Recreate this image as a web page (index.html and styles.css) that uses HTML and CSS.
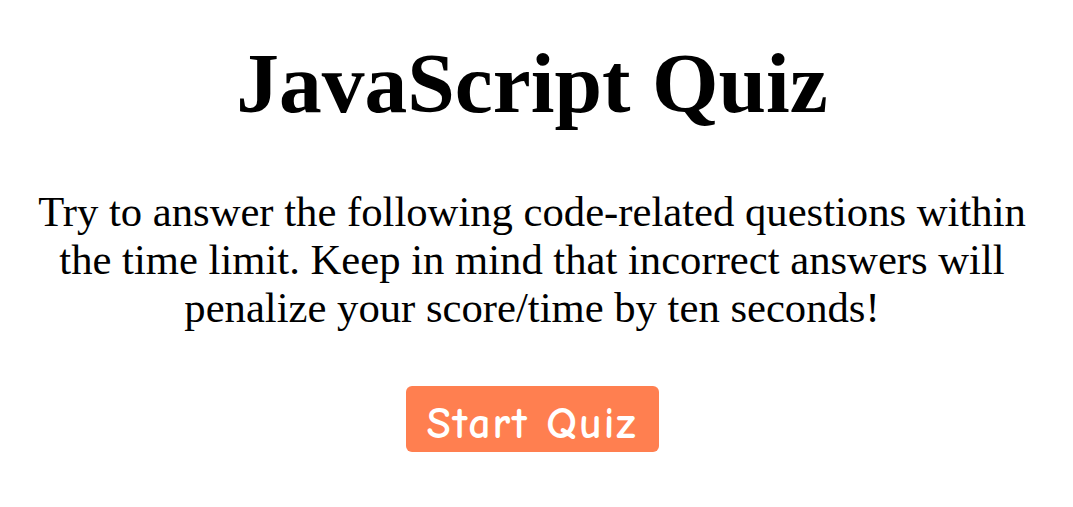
FILE: index.html
```html
<!DOCTYPE html>
<html>
<head>
<meta charset="utf-8">
<link rel="stylesheet" href="styles.css">
</head>
<body>
<main class="start">
  <h1 class="title">JavaScript Quiz</h1>
  <p class="intro">Try to answer the following code-related questions within the time limit. Keep in mind that incorrect answers will penalize your score/time by ten seconds!</p>
  <button class="start-btn">Start Quiz</button>
</main>
</body>
</html>
```
FILE: styles.css
```css
body {
  margin: 8px;
  font-family: "Liberation Serif", "Times New Roman", serif;
  color: #000;
  background: #fff;
}
.start {
  display: flex;
  flex-direction: column;
  align-items: center;
  text-align: center;
  padding: 0 29px 0 20px;
}
.title {
  font-size: 85.5px;
  font-weight: bold;
  margin: 26px 0 0;
  line-height: 1.15;
}
.intro {
  font-size: 32pt;
  line-height: 48px;
  margin: 56px 0 0;
}
.start-btn {
  margin-top: 54px;
  background: #ff7f50;
  color: #fff;
  border: none;
  border-radius: 6px;
  font-family: "Comic Sans MS", "Comic Neue", "DejaVu Sans", sans-serif;
  font-weight: bold;
  font-size: 44px;
  letter-spacing: 2px;
  padding: 8px 0 0;
  width: 253px;
  height: 66px;
}
```
